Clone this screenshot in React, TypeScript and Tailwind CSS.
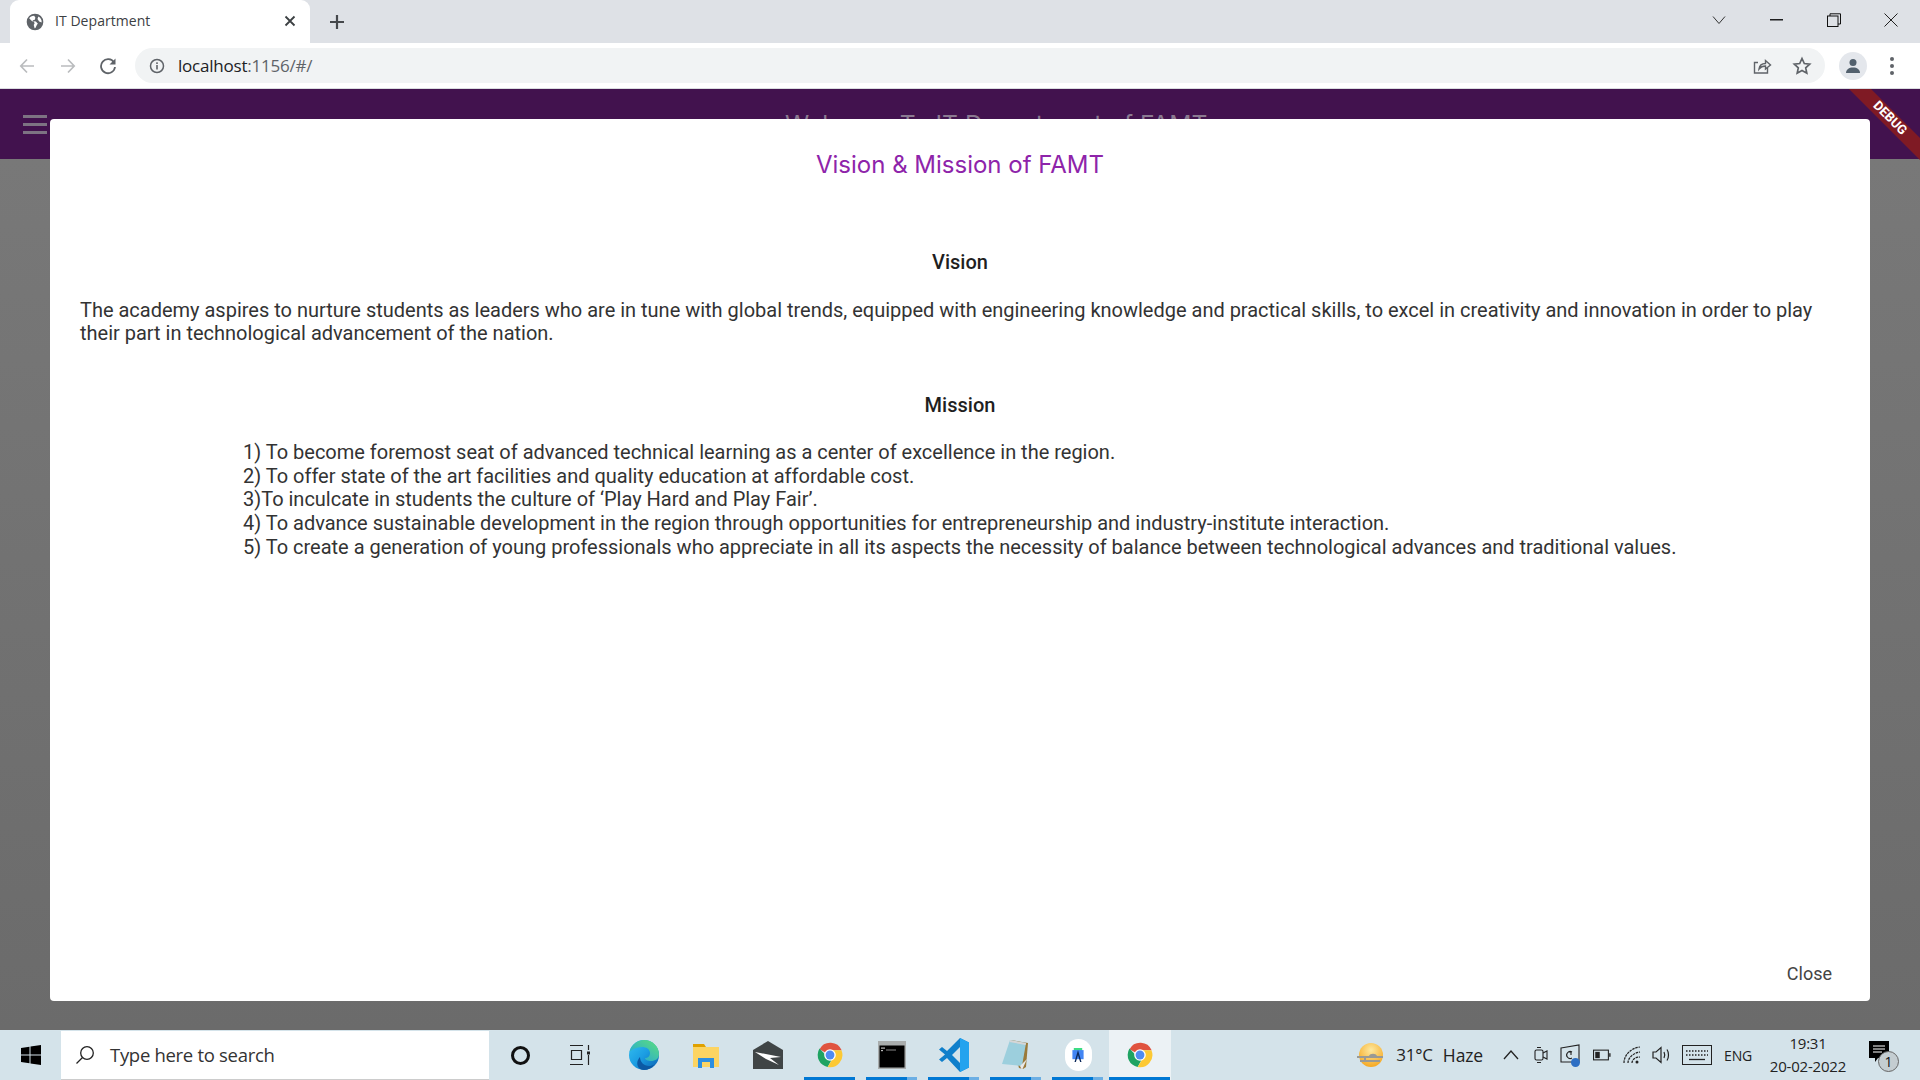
import React from "react";

const Chrome = () => (
  <svg viewBox="0 0 48 48" className="w-[28px] h-[32px]">
    <path d="M24 24 L6 14 A21 21 0 0 1 44 16 L24 16 Z" fill="#e0533f" />
    <path d="M6 13 A21 21 0 0 0 20 44.6 L30 26 L24 32 Z" fill="#1ea362" />
    <path d="M24 16 L43.6 16 A21 21 0 0 1 20 44.6 L31 26 Z" fill="#fcc934" />
    <circle cx="24" cy="24" r="10" fill="#fff" />
    <circle cx="24" cy="24" r="7.6" fill="#4f8bf1" />
  </svg>
);

const Cell = ({ children, bar, active, tail }: { children: React.ReactNode; bar?: boolean; active?: boolean; tail?: boolean }) => (
  <div className={`relative w-[62px] h-full flex items-center justify-center ${active ? "bg-[#ecf2f5]" : ""}`}>
    {children}
    {bar && (
      <div className={`absolute bottom-0 h-[3px] flex ${active ? "left-0 w-[61px]" : "left-[5px] w-[51px]"}`}>
        <div className={`${tail ? "w-[41px]" : "flex-1"} h-full bg-[#0078d4]`} />
        {tail && <div className="flex-1 h-full bg-[#6cafe4]" />}
      </div>
    )}
  </div>
);

export default function App() {
  const sans = "font-['Open_Sans','Liberation_Sans',sans-serif]";
  return (
    <div className="relative w-[1920px] h-[1080px] overflow-hidden flex flex-col font-['Roboto',sans-serif] bg-white">
      {/* tab strip */}
      <div className="h-[43px] shrink-0 bg-[#dee1e6] flex items-end">
        <div className="ml-[10px] w-[300px] h-[43px] bg-white rounded-t-[9px] flex items-center relative">
          <svg viewBox="0 0 24 24" className="w-[20px] h-[20px] ml-[15px]">
            <circle cx="12" cy="12" r="10" fill="#5f6368" />
            <path d="M11 4.5c-3 0-5 1.2-6 3l3.500 3.500 2 .5 1 2-1 2 1 4 1-.2 2-4.300 1-1-2.500-2.500-3-.5-1-1 2.500-.5 1-2.500zM16 5.500l-1 3 2 3 3 1c.3-3-1.300-5.700-4-7z" fill="#fff" />
          </svg>
          <span className={`ml-[10px] mb-[2px] text-[14px] text-[#3c4043] ${sans} tracking-[0.05px]`}>IT Department</span>
          <svg viewBox="0 0 12 12" className="absolute left-[274px] top-[15px] w-[12px] h-[12px]" stroke="#3c4043" strokeWidth="1.800" fill="none">
            <path d="M1.500 1.500l9 9M10.500 1.500l-9 9" />
          </svg>
        </div>
        <svg viewBox="0 0 16 16" className="ml-[19px] mb-[13px] w-[16px] h-[16px]" stroke="#45484c" strokeWidth="2.200" fill="none">
          <path d="M8 1v14M1 8h14" />
        </svg>
        <div className="flex-1" />
        <div className="flex items-center h-[40px] self-start">
          <svg viewBox="0 0 14 10" className="w-[14px] h-[10px] mr-[44px]" stroke="#333" strokeWidth="1" fill="none"><path d="M1 1.500l6 7 6-7" /></svg>
          <svg viewBox="0 0 14 2" className="w-[13px] h-[2px] mr-[44px]" fill="#111"><rect width="14" height="1.500" /></svg>
          <svg viewBox="0 0 14 14" className="w-[14px] h-[14px] mr-[43px]" stroke="#111" strokeWidth="1" fill="none"><rect x="0.500" y="3" width="10.500" height="10.500" /><path d="M3 3V0.800h10.500V11H11" /></svg>
          <svg viewBox="0 0 14 14" className="w-[14px] h-[14px] mr-[22px]" stroke="#222" strokeWidth="1" fill="none"><path d="M0.500 0.500l13 13M13.500 0.500l-13 13" /></svg>
        </div>
      </div>

      {/* toolbar */}
      <div className="h-[46px] shrink-0 bg-white border-b border-[#dadce0] flex items-center relative">
        <svg viewBox="0 0 16 16" className="ml-[19px] w-[16px] h-[16px]" stroke="#babcbe" strokeWidth="1.700" fill="none"><path d="M15 8H2M8 1.500L1.800 8 8 14.500" /></svg>
        <svg viewBox="0 0 16 16" className="ml-[25px] w-[16px] h-[16px]" stroke="#babcbe" strokeWidth="1.700" fill="none"><path d="M1 8h13M8 1.500L14.200 8 8 14.500" /></svg>
        <svg viewBox="0 0 18 18" className="ml-[23px] w-[18px] h-[18px]" fill="none">
          <path d="M15 5.500A7 7 0 1 0 16 10" stroke="#5f6368" strokeWidth="1.800" />
          <path d="M16.500 1.500v6h-6z" fill="#5f6368" />
        </svg>
        <div className="ml-[18px] w-[1690px] h-[35px] rounded-full bg-[#f1f3f4] flex items-center relative">
          <svg viewBox="0 0 16 16" className="ml-[14px] w-[16px] h-[16px]" fill="none">
            <circle cx="8" cy="8" r="6.500" stroke="#5f6368" strokeWidth="1.500" />
            <rect x="7.200" y="7" width="1.600" height="4.500" fill="#5f6368" />
            <rect x="7.200" y="4.300" width="1.600" height="1.700" fill="#5f6368" />
          </svg>
          <span className={`ml-[13px] text-[17px] tracking-[-0.22px] ${sans} text-[#202124]`}>localhost<span className="text-[#5f6368]">:1156/#/</span></span>
          <div className="flex-1" />
          <svg viewBox="0 0 20 20" className="w-[20px] h-[20px] mr-[20px]" fill="none" stroke="#5f6368" strokeWidth="1.400">
            <path d="M15.500 12v5H2.500V6.500H6" />
            <path d="M7 13c.5-4 3-5.500 6.500-5.500V4.500L18.500 9 13.500 13v-3c-3 0-5 1-6.500 3z" />
          </svg>
          <svg viewBox="0 0 20 20" className="w-[20px] h-[20px] mr-[13px]" fill="none" stroke="#5f6368" strokeWidth="1.700">
            <path d="M10 2.500l2.300 5 5.400.6-4 3.700 1.100 5.400L10 14.500l-4.800 2.700 1.100-5.400-4-3.700 5.400-.6z" />
          </svg>
        </div>
        <div className="ml-[14px] w-[28px] h-[28px] rounded-full bg-[#e4e7ec] flex items-center justify-center">
          <svg viewBox="0 0 18 18" className="w-[18px] h-[18px]" fill="#52606d">
            <circle cx="9" cy="5.500" r="3.500" />
            <path d="M2 16c0-3.500 3-5.500 7-5.500s7 2 7 5.500z" />
          </svg>
        </div>
        <div className="ml-[23px] flex flex-col gap-[3px]">
          <div className="w-[4px] h-[4px] rounded-full bg-[#5f6368]" />
          <div className="w-[4px] h-[4px] rounded-full bg-[#5f6368]" />
          <div className="w-[4px] h-[4px] rounded-full bg-[#5f6368]" />
        </div>
      </div>

      {/* flutter app behind scrim */}
      <div className="h-[70px] shrink-0 bg-[#42124e] flex items-center relative">
        <div className="ml-[23px] w-[24px] flex flex-col gap-[5px] mb-[-1px]">
          <div className="h-[3px] bg-[#7d7383]" />
          <div className="h-[3px] bg-[#7d7383]" />
          <div className="h-[3px] bg-[#7d7383]" />
        </div>
        <span className="absolute left-[785px] top-[20px] text-[24.6px] leading-[30px] font-['Inter',sans-serif] text-[#8b7a91] whitespace-nowrap">Welcome To IT Department of FAMT</span>
      </div>
      <div className="flex-1 bg-gradient-to-b from-[#787878] to-[#6b6b6b]" />

      {/* taskbar */}
      <div className={`h-[50px] shrink-0 bg-[#d4e3ea] flex items-center ${sans}`}>
        <div className="w-[61px] h-full flex items-center justify-center">
          <svg viewBox="0 0 20 20" className="w-[20px] h-[20px] mt-[-1px]" fill="#000">
            <path d="M0 3l8.500-1.300V9.500H0zM9.500 1.500L20 0v9.500H9.500zM0 10.500h8.500v7.800L0 17zM9.500 10.500H20V20L9.500 18.500z" />
          </svg>
        </div>
        <div className="w-[428px] h-[49px] bg-white border-b border-[#ccc] flex items-center">
          <svg viewBox="0 0 20 20" className="ml-[14px] w-[20px] h-[20px]" stroke="#222" strokeWidth="1.300" fill="none">
            <circle cx="12" cy="8" r="6.300" /><path d="M7.500 12.500L1.500 18.500" />
          </svg>
          <span className="ml-[15px] text-[18.5px] tracking-[-0.3px] text-[#333]">Type here to search</span>
        </div>
        <div className="w-[62px] h-full flex items-center justify-center">
          <div className="w-[19px] h-[19px] rounded-full border-[3px] border-[#111]" />
        </div>
        <div className="w-[58px] h-full flex items-center justify-center">
          <svg viewBox="0 0 22 22" className="w-[22px] h-[22px]" stroke="#222" strokeWidth="1.200" fill="none">
            <path d="M1 1.500h13M1 20.500h13M2.500 6.500h10v9h-10zM19.500 1v5M19.500 11v10" />
            <rect x="18" y="7.500" width="3" height="3" fill="#222" stroke="none" />
          </svg>
        </div>
        <div className="w-[4px]" />
        <Cell>
          <svg viewBox="0 0 32 32" className="w-[32px] h-[32px]">
            <defs>
              <linearGradient id="eg" x1="0" y1="0" x2="1" y2="1"><stop offset="0" stopColor="#35c1f1" /><stop offset="0.5" stopColor="#1b9de2" /><stop offset="1" stopColor="#0b5fb0" /></linearGradient>
              <linearGradient id="eg2" x1="1" y1="0" x2="0" y2="1"><stop offset="0" stopColor="#5fe07a" /><stop offset="1" stopColor="#1ea0e0" /></linearGradient>
            </defs>
            <circle cx="16" cy="16" r="15" fill="url(#eg)" />
            <path d="M16 1C25 1 31 8 31 15c0 5-4 7-8 7-3 0-6-1-6-3 3 0 5-2 5-5 0-4-4-6-8-6C9 8 3 11 1.500 13 3 6 9 1 16 1z" fill="url(#eg2)" />
            <path d="M12 18c0 5 4 9 9 9 2 0 4-.5 6-2-3 4-7 6-11 6-6 0-8-6-6-10 .5-1 1.500-2.500 2-3z" fill="#0c59a4" />
          </svg>
        </Cell>
        <Cell>
          <svg viewBox="0 0 28 28" className="w-[28px] h-[28px]">
            <path d="M1 3h11l2 3H1z" fill="#e0a100" />
            <rect x="1" y="6" width="26" height="20" fill="#fcd462" />
            <path d="M6 27V17h16v10h-4v-6h-8v6z" fill="#2d8fe0" />
          </svg>
        </Cell>
        <Cell>
          <svg viewBox="0 0 30 28" className="w-[30px] h-[28px]">
            <path d="M0 9L15 0l15 9v19H0z" fill="#404546" />
            <path d="M2 11l26 5-11 1 9 7-13-6-11-7z" fill="#fff" />
          </svg>
        </Cell>
        <Cell bar><Chrome /></Cell>
        <Cell bar tail>
          <svg viewBox="0 0 28 28" className="w-[28px] h-[28px]">
            <rect width="28" height="28" fill="#a9adad" />
            <rect x="1.500" y="4.500" width="25" height="22" fill="#000" />
            <rect x="3" y="6.500" width="4" height="1.200" fill="#bbb" />
            <rect x="3" y="9" width="2" height="1.200" fill="#bbb" />
            <rect x="8" y="8.500" width="10" height="1" fill="#888" />
          </svg>
        </Cell>
        <Cell bar tail>
          <svg viewBox="0 0 30 36" className="w-[30px] h-[36px]">
            <path d="M21 1l9 4.500v25L21 35 8 21l-5 4-3-2.500 6-5-6-5L3 10l5 4z" fill="#0f7fcb" />
            <path d="M21 1l9 4.500v25L21 35z" fill="#24a3ee" />
            <path d="M21 10l-8 8 8 8z" fill="#d4e3ea" />
          </svg>
        </Cell>
        <Cell bar tail>
          <svg viewBox="0 0 30 32" className="w-[30px] h-[32px]">
            <path d="M10 1l17 3-2 24-3 2-4-1z" fill="#9a7a3a" />
            <path d="M9 1l16 3-4 23-20-2z" fill="#9ccfdd" />
            <path d="M19 27l7-7-5 11z" fill="#e8e8e8" />
            <path d="M9 1l16 3-.4 2L8.600 3z" fill="#d6d6d6" />
          </svg>
        </Cell>
        <Cell bar tail>
          <div className="w-[27px] h-[32px] rounded-full bg-white flex items-center justify-center">
            <svg viewBox="0 0 20 24" className="w-[14px] h-[18px]">
              <path d="M4 2h12v4H4z" fill="#3ddc84" />
              <path d="M2 5h16v13H2z" fill="#4285f4" />
              <path d="M10 5l5 17h-2l-3-10-3 10H5z" fill="#0d2a5c" />
            </svg>
          </div>
        </Cell>
        <Cell bar active><Chrome /></Cell>
        <div className="flex-1" />
        {/* tray */}
        <svg viewBox="0 0 30 26" className="w-[30px] h-[26px] mr-[10px]">
          <defs><radialGradient id="sun" cx="0.500" cy="0.300" r="0.700"><stop offset="0" stopColor="#fde9a0" /><stop offset="1" stopColor="#f6a821" /></radialGradient></defs>
          <circle cx="15" cy="13" r="12" fill="url(#sun)" />
          <path d="M1 14h12c1-3 7-3 8 0h6v2H10v2h14v2H4v-2h4v-2H1z" fill="#9a9a94" />
        </svg>
        <span className="text-[17px] tracking-[-0.2px] text-[#222] mr-[10px]">31°C</span>
        <span className="text-[17.5px] tracking-[-0.1px] text-[#222] mr-[20px]">Haze</span>
        <svg viewBox="0 0 16 10" className="w-[16px] h-[10px] mr-[15px]" stroke="#222" strokeWidth="1.300" fill="none"><path d="M1 9l7-8 7 8" /></svg>
        <svg viewBox="0 0 14 18" className="w-[14px] h-[18px] mr-[12px]" stroke="#222" strokeWidth="1.100" fill="none"><rect x="1" y="4" width="8" height="10" rx="1.500" /><path d="M9 7l4-2v8l-4-2M3 1.500h4M3 16.500h4" /></svg>
        <div className="relative mr-[13px]">
          <svg viewBox="0 0 20 22" className="w-[20px] h-[22px]" stroke="#222" strokeWidth="1.100" fill="none"><path d="M1 4l18-3v17H1zM12 8a3.500 3.500 0 1 0 0 6M8 8h3v3" /></svg>
          <div className="absolute left-[11px] top-[14px] w-[9px] h-[9px] rounded-full bg-[#2d6fc4]" />
        </div>
        <svg viewBox="0 0 20 12" className="w-[18px] h-[12px] mr-[12px]" stroke="#222" strokeWidth="1.200" fill="none"><rect x="0.600" y="0.600" width="16.500" height="10.800" /><rect x="2.500" y="2.500" width="5" height="7" fill="#222" stroke="none" /><rect x="18" y="4" width="1.500" height="4" fill="#222" stroke="none" /></svg>
        <svg viewBox="0 0 18 18" className="w-[18px] h-[18px] mr-[11px]" stroke="#222" strokeWidth="1.200" fill="none"><path d="M1 17C1 9 8 2 17 1M5 17c0-5 5-10 12-11M9 17c0-3 3-6 8-6" strokeDasharray="2.500 .8" /><circle cx="14" cy="16" r="1.500" fill="#222" stroke="none" /></svg>
        <svg viewBox="0 0 20 18" className="w-[20px] h-[18px] mr-[10px]" stroke="#222" strokeWidth="1.200" fill="none"><path d="M1 6h3l5-4.500v15L4 12H1zM12 6c1 2 1 4 0 6M15 3.500c2 3 2 8 0 11" /></svg>
        <svg viewBox="0 0 30 20" className="w-[30px] h-[20px] mr-[12px]" stroke="#222" fill="none"><rect x="0.500" y="0.500" width="29" height="19" strokeWidth="1" /><path d="M4 6h22M4 10h22" strokeWidth="1.300" strokeDasharray="1.500 1.500" /><path d="M7 14.500h16" strokeWidth="1.300" /></svg>
        <span className="text-[14px] tracking-[-0.2px] text-[#222] mr-[16px]">ENG</span>
        <div className="flex flex-col items-center text-[15px] leading-[23px] tracking-[-0.2px] text-[#222] w-[80px] mr-[21px]">
          <span>19:31</span>
          <span>20-02-2022</span>
        </div>
        <div className="relative w-[20px] h-[20px] mr-[31px] mt-[-8px]">
          <svg viewBox="0 0 20 22" className="w-[20px] h-[22px]" fill="#000"><path d="M0 0h20v17H9l-3 4v-4H0z" /><path d="M4 5h12M4 8h12M4 11h9" stroke="#fff" strokeWidth="1" /></svg>
          <div className="absolute left-[9px] top-[10px] w-[21px] h-[21px] rounded-full bg-[#c4cdd1] border border-[#666] flex items-center justify-center text-[14px] text-[#111]">1</div>
        </div>
      </div>

      {/* dialog */}
      <div className="absolute left-[50px] top-[119px] w-[1820px] h-[882px] bg-white rounded-[4px] flex flex-col">
        <h2 className="mt-[30px] text-center text-[24px] leading-[32px] font-['Inter',sans-serif] text-[#8e24aa] tracking-[0px]">Vision &amp; Mission of FAMT</h2>
        <div className="mt-[69px] text-center text-[20px] leading-[24px] font-medium text-[#1f1f1f]">Vision</div>
        <p className="mt-[25px] mx-[30px] text-[20px] leading-[23px] tracking-[-0.008px] text-[#333]">The academy aspires to nurture students as leaders who are in tune with global trends, equipped with engineering knowledge and practical skills, to excel in creativity and innovation in order to play their part in technological advancement of the nation.</p>
        <div className="mt-[48px] text-center text-[20px] leading-[24px] font-medium text-[#1f1f1f]">Mission</div>
        <div className="mt-[24px] ml-[193px] text-[20px] leading-[23.7px] tracking-[-0.008px] text-[#333]">
          <div>1) To become foremost seat of advanced technical learning as a center of excellence in the region.</div>
          <div>2) To offer state of the art facilities and quality education at affordable cost.</div>
          <div>3)To inculcate in students the culture of ‘Play Hard and Play Fair’.</div>
          <div>4) To advance sustainable development in the region through opportunities for entrepreneurship and industry-institute interaction.</div>
          <div>5) To create a generation of young professionals who appreciate in all its aspects the necessity of balance between technological advances and traditional values.</div>
        </div>
        <div className="flex-1" />
        <div className="flex justify-end pr-[38px] pb-[15px]">
          <span className="text-[18px] leading-[24px] text-[#444]">Close</span>
        </div>
      </div>

      {/* debug banner */}
      <svg viewBox="0 0 71 71" className="absolute left-[1849px] top-[89px] w-[71px] h-[71px]">
        <path d="M0 0h22l49 49v22z" fill="#7f1a24" />
      </svg>
      <span className="absolute left-[1865px] top-[110px] w-[50px] text-center rotate-45 text-[13px] leading-[16px] font-bold text-white font-['Roboto',sans-serif]">DEBUG</span>
    </div>
  );
}
